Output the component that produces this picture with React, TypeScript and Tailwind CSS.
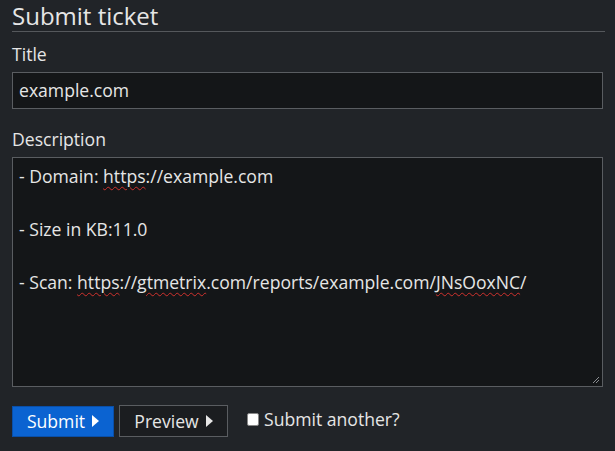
import React from "react";

const Tri = () => (
  <svg width="7" height="12" viewBox="0 0 7 12" className="inline-block ml-[7px]">
    <path d="M0 0 L7 6 L0 12 Z" fill="currentColor" />
  </svg>
);

const Sp = ({ children }: { children: React.ReactNode }) => (
  <span className="underline decoration-wavy decoration-[#d0312d] decoration-1 underline-offset-[3px]">{children}</span>
);

export default function App() {
  return (
    <div
      className="w-[615px] h-[451px] bg-[#212428] text-[#e6e6e6] px-[12px] pt-[1px] overflow-hidden"
      style={{ fontFamily: '"Open Sans", "Noto Sans", sans-serif' }}
    >
      <h1 className="text-[24px] leading-[30px] border-b border-[#55585c] mr-[-2px]">Submit ticket</h1>
      <div className="text-[17.6px] leading-[24px] mt-[10px]">Title</div>
      <div className="mt-[6px] h-[37px] border border-[#5a5d61] bg-[#141618] flex items-center px-[6px] text-[17.6px]">
        example.com
      </div>
      <div className="text-[17.6px] leading-[24px] mt-[18px]">Description</div>
      <div className="relative mt-[6px] h-[230px] border border-[#5a5d61] bg-[#141618] px-[6px] pt-[5px] text-[17.6px] leading-[26.5px]">
        <div>- Domain: <Sp>https</Sp>://example.com</div>
        <div>&nbsp;</div>
        <div>- Size in KB:11.0</div>
        <div>&nbsp;</div>
        <div>- Scan: <Sp>https</Sp>://<Sp>gtmetrix</Sp>.com/reports/example.com/<Sp>JNsOoxNC</Sp>/</div>
        <svg width="8" height="8" viewBox="0 0 8 8" className="absolute right-[2px] bottom-[2px]">
          <path d="M1 7 L7 1 M4 7 L7 4" stroke="#8a8d91" strokeWidth="1" />
        </svg>
      </div>
      <div className="flex items-center mt-[18px]">
        <button className="h-[31px] w-[102px] bg-[#0b63d1] border border-[#0a4fa8] text-white text-[17.6px] flex items-center justify-center">
          Submit<Tri />
        </button>
        <button className="ml-[5px] h-[32px] w-[109px] bg-[#1b1d20] border border-[#5a5d61] text-[#e6e6e6] text-[17.6px] flex items-center justify-center">
          Preview<Tri />
        </button>
        <label className="ml-[19px] flex items-center text-[17.6px] mt-[-3px]">
          <span className="w-[12px] h-[13px] bg-white rounded-[2px] border border-[#888]"></span>
          <span className="ml-[5px]">Submit another?</span>
        </label>
      </div>
    </div>
  );
}
